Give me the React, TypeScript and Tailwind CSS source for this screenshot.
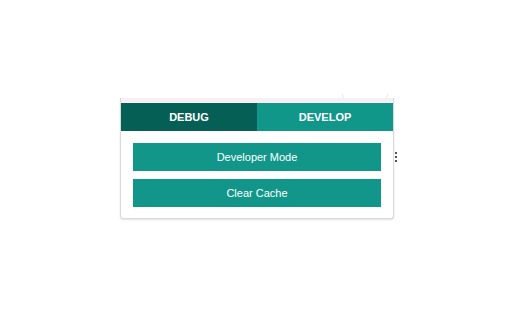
import React from 'react';

const tabs = [
  { label: 'DEBUG', active: true },
  { label: 'DEVELOP', active: false },
];

const actions = ['Developer Mode', 'Clear Cache'];

export default function App() {
  return (
    <div
      className="w-[512px] h-[320px] bg-white pt-[98px] pl-[120px]"
      style={{ fontFamily: '"Liberation Sans", Arial, sans-serif' }}
    >
      <div className="relative w-[274px]">
        {/* faint edge of the element behind */}
        <div className="absolute right-[6px] top-[-4px] w-[46px] h-[9px] rounded-b-full border border-t-0 border-[#e6e6e6] bg-white" />
        <div className="relative border-x border-b border-[#d9d9d9] rounded-b-[3px] bg-white shadow-[0_1px_2px_rgba(0,0,0,0.12)]">
          <div className="h-[5px] bg-[#f6eff3]" />
          <div className="flex">
            {tabs.map((t) => (
              <div
                key={t.label}
                className={
                  'flex-1 h-[28px] flex items-center justify-center text-white text-[11px] font-bold ' +
                  (t.active ? 'bg-[#065f55]' : 'bg-[#11968a]')
                }
              >
                {t.label}
              </div>
            ))}
          </div>
          <div className="flex flex-col gap-[8px] px-[12px] pt-[12px] pb-[11px]">
            {actions.map((a) => (
              <button
                key={a}
                className="h-[28px] w-full bg-[#12968a] text-white text-[11px] flex items-center justify-center"
              >
                {a}
              </button>
            ))}
          </div>
        </div>
        {/* tiny vertical dots beside the card */}
        <div className="absolute right-[-3px] top-[54px] flex flex-col gap-[2px]">
          <div className="w-[2px] h-[2px] bg-[#555]" />
          <div className="w-[2px] h-[2px] bg-[#555]" />
          <div className="w-[2px] h-[2px] bg-[#555]" />
        </div>
      </div>
    </div>
  );
}
